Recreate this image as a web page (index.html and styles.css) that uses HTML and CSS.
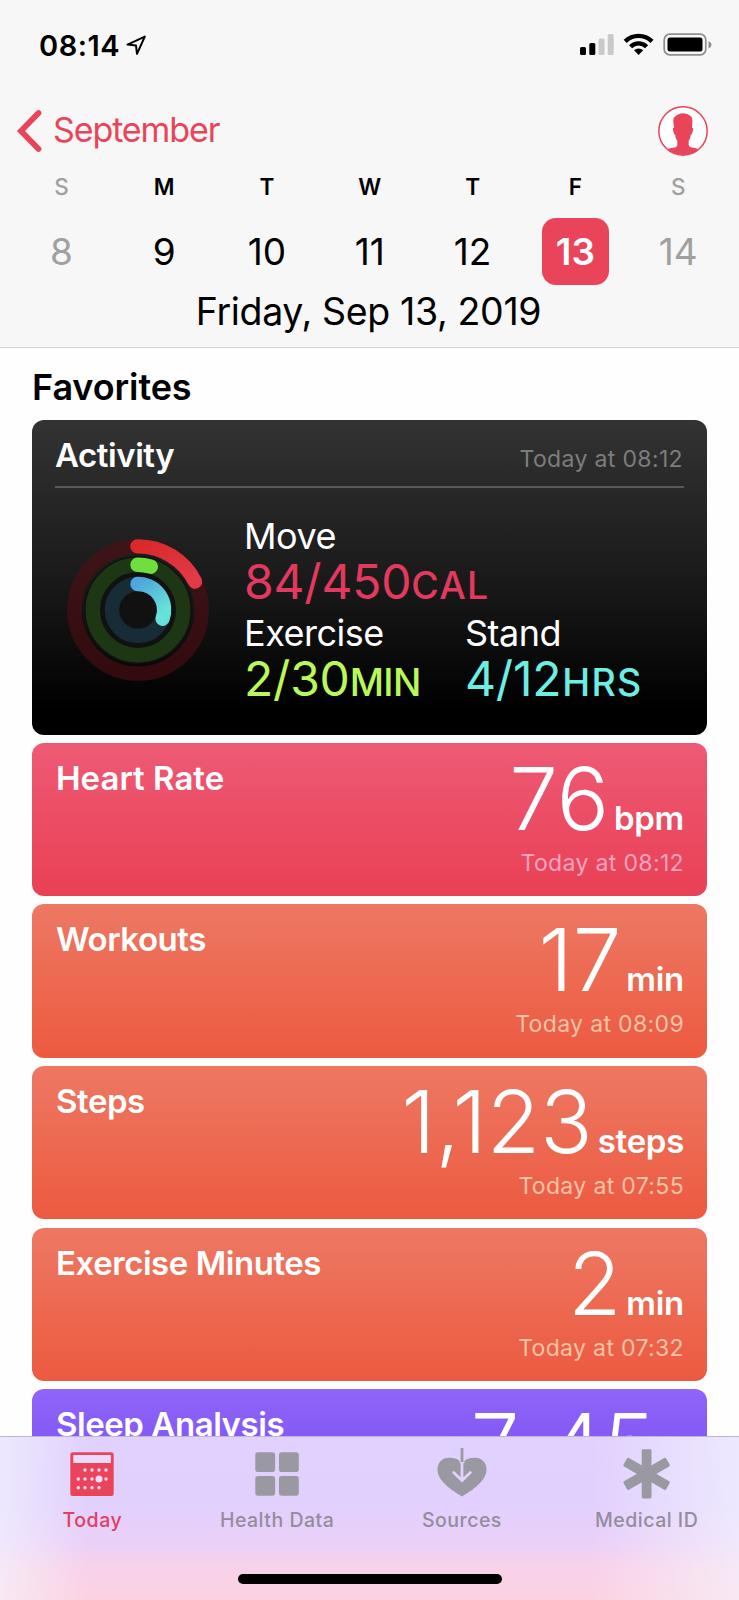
FILE: index.html
```
<!DOCTYPE html>
<html lang="en">
<head>
    <meta charset="UTF-8">
    <title>Health</title>
    <link rel="stylesheet" href="styles.css">
</head>
<body>
    <div class="header">
        <div class="status">
            <span class="clock">08:14</span>
            <svg class="loc" width="21" height="21" viewBox="0 0 21 21"><path d="M1.5 9.6 L18.8 1.6 L11 18.8 L10 10.6 Z" fill="none" stroke="#000" stroke-width="2" stroke-linejoin="round"/></svg>
            <svg class="signal" width="134" height="24" viewBox="0 0 134 24">
                <rect x="1" y="14" width="6" height="8" rx="1.5"/>
                <rect x="10.3" y="10" width="6" height="12" rx="1.5"/>
                <rect x="19.6" y="5.5" width="6" height="16.5" rx="1.5" fill="#c9c9c9"/>
                <rect x="28.7" y="1" width="6" height="21" rx="1.5" fill="#c9c9c9"/>
                <g fill="none" stroke="#000" stroke-width="4.4">
                    <path d="M46.2 8.4 A19 19 0 0 1 73 8.4"/>
                    <path d="M51.6 13.7 A11.4 11.4 0 0 1 67.6 13.7"/>
                </g>
                <path d="M55 17.3 A6.5 6.5 0 0 1 64.2 17.3 L59.6 22 Z"/>
                <rect x="85.2" y="1.2" width="41.6" height="20.6" rx="5.5" fill="none" stroke="#8e8e8e" stroke-width="1.7"/>
                <rect x="88.5" y="4.5" width="35" height="14" rx="2.5"/>
                <path d="M129.5 8 Q132.6 9.5 132.6 11.7 Q132.6 14 129.5 15.4 Z" fill="#8e8e8e"/>
            </svg>
        </div>
        <div class="nav">
            <svg width="26" height="44" viewBox="0 0 26 44"><path d="M22.5 4 L5 22 L22.5 40" fill="none" stroke="#ea445a" stroke-width="5.8" stroke-linecap="round"/></svg>
            <span class="back">September</span>
            <svg class="avatar" width="50" height="50" viewBox="0 0 150 150">
                <circle cx="75" cy="75" r="72.5" fill="#fff" stroke="#ea445a" stroke-width="4.5"/>
                <path fill="#ea445a" d="M75 22 C85 22 90 25 94 28 C102 32 104 38 103 48 L102 65 C106 65 106 69 104 76 C103 83 101 86 98 87 C97 96 95 101 92 104 L92 116 C93 123 99 124 106 125 C114 126 118 128 122 130 A73 73 0 0 1 28 130 C34 127 39 126 45 125 C53 124 58 122 58 116 L58 104 C54 100 52 94 52 87 C49 86 47 83 46 76 C44 69 44 65 48 65 L46 48 C45 39 47 33 54 29 C60 25 66 22 75 22 Z"/>
            </svg>
        </div>
        <div class="week">
            <div class="day off"><b>S</b><span>8</span></div>
            <div class="day"><b>M</b><span>9</span></div>
            <div class="day"><b>T</b><span>10</span></div>
            <div class="day"><b>W</b><span>11</span></div>
            <div class="day"><b>T</b><span>12</span></div>
            <div class="day on"><b>F</b><span>13</span></div>
            <div class="day off"><b>S</b><span>14</span></div>
        </div>
        <div class="date">Friday, Sep 13, 2019</div>
    </div>

    <div class="main">
        <h2>Favorites</h2>
        <div class="activity">
            <div class="head">
                <h3>Activity</h3>
                <span class="time">Today at 08:12</span>
            </div>
            <div class="body">
                <svg class="rings" width="144" height="144" viewBox="-72 -72 144 144">
                    <defs>
                        <linearGradient id="red" x1="0" y1="0" x2="1" y2="1"><stop offset="0" stop-color="#d92a2a"/><stop offset="1" stop-color="#e23a48"/></linearGradient>
                        <linearGradient id="blue" x1="0" y1="0" x2="0.6" y2="1"><stop offset="0" stop-color="#4fa6dc"/><stop offset="1" stop-color="#66e2d8"/></linearGradient>
                        <linearGradient id="redTrack" x1="0" y1="0" x2="0" y2="1"><stop offset="0" stop-color="#3d1518"/><stop offset="1" stop-color="#330b0e"/></linearGradient>
                    </defs>
                    <circle r="54" fill="#111"/>
                    <g fill="none" stroke-width="14.4" stroke-linecap="round">
                        <circle r="63.6" stroke="url(#redTrack)"/>
                        <circle r="45.2" stroke="#1d3714"/>
                        <circle r="26" stroke="#182c37"/>
                        <path d="M-0.5 -63.6 A63.6 63.6 0 0 1 57 -28.4" stroke="url(#red)"/>
                        <path d="M-0.5 -45.2 A45.2 45.2 0 0 1 12.8 -43.3" stroke="#6fdf3f"/>
                        <path d="M-0.5 -26 A26 26 0 0 1 24.6 8.7" stroke="url(#blue)"/>
                    </g>
                </svg>
                <div class="stats">
                    <div class="stat move"><p>Move</p><strong>84/450<small>CAL</small></strong></div>
                    <div class="stat exercise"><p>Exercise</p><strong>2/30<small>MIN</small></strong></div>
                    <div class="stat stand"><p>Stand</p><strong>4/12<small>HRS</small></strong></div>
                </div>
            </div>
        </div>
        <div class="card heart">
            <h3>Heart Rate</h3>
            <div class="info">
                <p class="value">76<small>bpm</small></p>
                <span class="time">Today at 08:12</span>
            </div>
        </div>
        <div class="card">
            <h3>Workouts</h3>
            <div class="info">
                <p class="value">17<small>min</small></p>
                <span class="time">Today at 08:09</span>
            </div>
        </div>
        <div class="card">
            <h3>Steps</h3>
            <div class="info">
                <p class="value">1,123<small>steps</small></p>
                <span class="time">Today at 07:55</span>
            </div>
        </div>
        <div class="card">
            <h3>Exercise Minutes</h3>
            <div class="info">
                <p class="value">2<small>min</small></p>
                <span class="time">Today at 07:32</span>
            </div>
        </div>
        <div class="card sleep">
            <h3>Sleep Analysis</h3>
            <div class="info">
                <p class="value">7<small class="hour">h</small>45<small class="minute">m</small></p>
            </div>
        </div>
    </div>

    <div class="footer">
        <div class="tabs">
            <div class="tab active">
                <svg width="50" height="52" viewBox="0 0 50 52">
                    <rect x="3.3" y="4.3" width="43.4" height="43.6" rx="2.5" fill="#ea445a"/>
                    <rect x="6.3" y="7" width="37.6" height="8" fill="#e9dafc"/>
                    <g fill="#f3dcf6">
                        <circle cx="18" cy="22" r="1.7"/><circle cx="25" cy="22" r="1.7"/><circle cx="32" cy="22" r="1.7"/><circle cx="39" cy="22" r="1.7"/>
                        <circle cx="11.3" cy="31" r="1.7"/><circle cx="18" cy="31" r="1.7"/><circle cx="25" cy="31" r="1.7"/><circle cx="32" cy="31" r="3.5"/><circle cx="39" cy="31" r="1.7"/>
                        <circle cx="11.3" cy="39.8" r="1.7"/><circle cx="18" cy="39.8" r="1.7"/><circle cx="25" cy="39.8" r="1.7"/><circle cx="32" cy="39.8" r="1.7"/>
                    </g>
                </svg>
                <span>Today</span>
            </div>
            <div class="tab">
                <svg width="50" height="52" viewBox="0 0 50 52">
                    <g fill="#9a98a0">
                        <rect x="3.3" y="4.3" width="19.8" height="19.8" rx="2.8"/><rect x="27" y="4.3" width="19.8" height="19.8" rx="2.8"/>
                        <rect x="3.3" y="28" width="19.8" height="19.8" rx="2.8"/><rect x="27" y="28" width="19.8" height="19.8" rx="2.8"/>
                    </g>
                </svg>
                <span>Health Data</span>
            </div>
            <div class="tab">
                <svg width="50" height="52" viewBox="0 0 50 52">
                    <path fill="#9a98a0" d="M25 48.5 C15 42.5 0.5 33 0.5 21.5 C0.5 14 6 9.8 12 9.8 C18 9.8 22 11.5 25 15 C28 11.5 32 9.8 38 9.8 C44 9.8 49.5 14 49.5 21.5 C49.5 33 35 42.5 25 48.5 Z"/>
                    <path d="M25 12 V32 M16.6 24.5 L25 32.5 L33.4 24.5" fill="none" stroke="#e2d1fc" stroke-width="2.8" stroke-linecap="round"/>
                    <path d="M25 9 V15" stroke="#e2d1fc" stroke-width="5"/>
                    <path d="M25 0 V14" stroke="#9a98a0" stroke-width="2.8"/>
                </svg>
                <span>Sources</span>
            </div>
            <div class="tab">
                <svg width="50" height="52" viewBox="0 0 50 52">
                    <g fill="#9a98a0">
                        <rect x="19.7" y="1.2" width="9.8" height="49.2" rx="1.4"/>
                        <rect x="19.7" y="1.2" width="9.8" height="49.2" rx="1.4" transform="rotate(60 24.6 25.8)"/>
                        <rect x="19.7" y="1.2" width="9.8" height="49.2" rx="1.4" transform="rotate(-60 24.6 25.8)"/>
                    </g>
                </svg>
                <span>Medical ID</span>
            </div>
        </div>
        <div class="home"></div>
    </div>
</body>
</html>
```
FILE: styles.css
```
* {
    margin: 0;
    padding: 0;
    box-sizing: border-box;
}
body{
    display: flex;
    flex-direction: column;
    width: 739px;
    height: 1600px;
    overflow: hidden;
    background: #fefefe;
    color: #000;
    font-family: Inter, "Liberation Sans", sans-serif;
}
svg{
    display: block;
    flex: none;
}

/* header */
.header{
    height: 348px;
    flex: none;
    background: #f7f7f7;
    border-bottom: 1px solid #d2d2d2;
}
.status{
    display: flex;
    align-items: center;
    height: 90px;
    padding: 0 26px 0 39px;
}
.clock{
    font-size: 29px;
    font-weight: 600;
    letter-spacing: 0.5px;
}
.loc{
    margin-left: 6px;
}
.signal{
    margin-left: auto;
}
.nav{
    display: flex;
    align-items: center;
    height: 81px;
    padding: 0 31px 0 16px;
}
.back{
    margin-left: 11px;
    padding-bottom: 2px;
    font-size: 34px;
    letter-spacing: -1.1px;
    color: #ea445a;
}
.avatar{
    margin-left: auto;
}
.week{
    display: grid;
    grid-template-columns: repeat(7, 102.8px);
    margin-left: 10px;
}
.day{
    display: flex;
    flex-direction: column;
    align-items: center;
    gap: 15px;
}
.day b{
    font-size: 22.5px;
    font-weight: 600;
    line-height: 32px;
}
.day span{
    width: 67px;
    border-radius: 14px;
    font-size: 37px;
    line-height: 67px;
    text-align: center;
}
.off{
    color: #a0a0a0;
}
.off b{
    font-weight: 500;
}
.on span{
    background: #ea445a;
    color: #fff;
    font-weight: 600;
}
.date{
    padding-right: 2px;
    font-size: 37.5px;
    line-height: 54px;
    letter-spacing: -0.35px;
    text-align: center;
}

/* cards */
.main{
    flex: 1;
    min-height: 0;
    overflow: hidden;
    padding: 7px 32px 0;
}
h2{
    font-size: 36px;
    font-weight: 600;
    letter-spacing: -0.1px;
    line-height: 65px;
}
h3{
    color: #fff;
    font-size: 33px;
    font-weight: 600;
    letter-spacing: -0.45px;
}
.time{
    font-size: 23px;
    letter-spacing: 0.35px;
}
.activity{
    height: 314.5px;
    padding: 2px 23px 0;
    border-radius: 12px;
    background: linear-gradient(#333, #1a1a1a 50%, #000 92%);
}
.head{
    display: flex;
    justify-content: space-between;
    align-items: baseline;
    height: 66px;
    border-bottom: 2px solid #585858;
    line-height: 66px;
}
.head .time{
    color: #7d7d7d;
    padding-right: 1px;
}
.body{
    display: flex;
    padding-top: 25px;
}
.rings{
    margin: 25px 35px 0 11px;
}
.stats{
    display: grid;
    grid-template-columns: 221px 1fr;
    row-gap: 4px;
    margin-left: -1px;
}
.stat p{
    color: #fff;
    font-size: 36px;
    letter-spacing: -0.5px;
    line-height: 46px;
}
.stat strong{
    display: block;
    height: 47px;
    font-size: 48px;
    font-weight: 400;
    letter-spacing: -0.2px;
    line-height: 46px;
}
.stat small{
    font-size: 37.5px;
    font-weight: 500;
    line-height: 30px;
}
.move{
    grid-column: 1 / 3;
    color: #e23a5f;
}
.move small{
    letter-spacing: 1.2px;
}
.exercise{
    color: #b9f75a;
}
.exercise small{
    letter-spacing: -0.6px;
}
.stand{
    color: #6eeee2;
}
.stand small{
    margin-left: 1px;
    letter-spacing: 1.2px;
}
.card{
    display: flex;
    justify-content: space-between;
    height: 153.2px;
    margin-top: 8.4px;
    padding: 18px 23px 0 24px;
    border-radius: 12px;
    background: linear-gradient(#ee7863, #ec5a40);
}
.card h3{
    line-height: 34px;
}
.card .time{
    display: block;
    margin-top: 18px;
    line-height: 30px;
    color: #f9c3a6;
}
.heart{
    background: linear-gradient(#ee5a75, #e94055);
}
.heart h3{
    letter-spacing: 0;
}
.heart .time{
    color: #f9a5bf;
}
.sleep{
    background: linear-gradient(#8f65fa, #6d42ea);
}
.info{
    padding-top: 6px;
    color: #fff;
    text-align: right;
}
.value{
    height: 63px;
    font-size: 87px;
    font-weight: 300;
    line-height: 63px;
    white-space: nowrap;
}
.value small{
    margin-left: 5px;
    font-size: 33px;
    font-weight: 600;
    letter-spacing: -0.3px;
    line-height: 20px;
}
.value .hour{
    margin: 0 5px 0 4px;
}
.value .minute{
    margin-left: 0;
}

/* bottom bar */
.footer{
    height: 164px;
    flex: none;
    border-top: 1px solid #c0b2da;
    background:
        linear-gradient(to right, rgba(245, 248, 255, 0.6), rgba(245, 248, 255, 0) 12%, rgba(245, 248, 255, 0) 80%, rgba(245, 248, 255, 0.6)),
        linear-gradient(#e1d1fe, #e1d0fd 40%, #ead0f8 64%, #f7d2e9 80%, #fcd2e2);
}
.tabs{
    display: grid;
    grid-template-columns: repeat(4, 1fr);
    height: 137px;
    padding-top: 11px;
}
.tab{
    display: flex;
    flex-direction: column;
    align-items: center;
    color: #938d9c;
    font-size: 19.5px;
    font-weight: 450;
    letter-spacing: 0.5px;
}
.tab span{
    margin-top: 8px;
    line-height: 24px;
}
.active{
    color: #e0405f;
}
.home{
    width: 264px;
    height: 10px;
    margin: 0 auto;
    border-radius: 5px;
    background: #000;
}
```
